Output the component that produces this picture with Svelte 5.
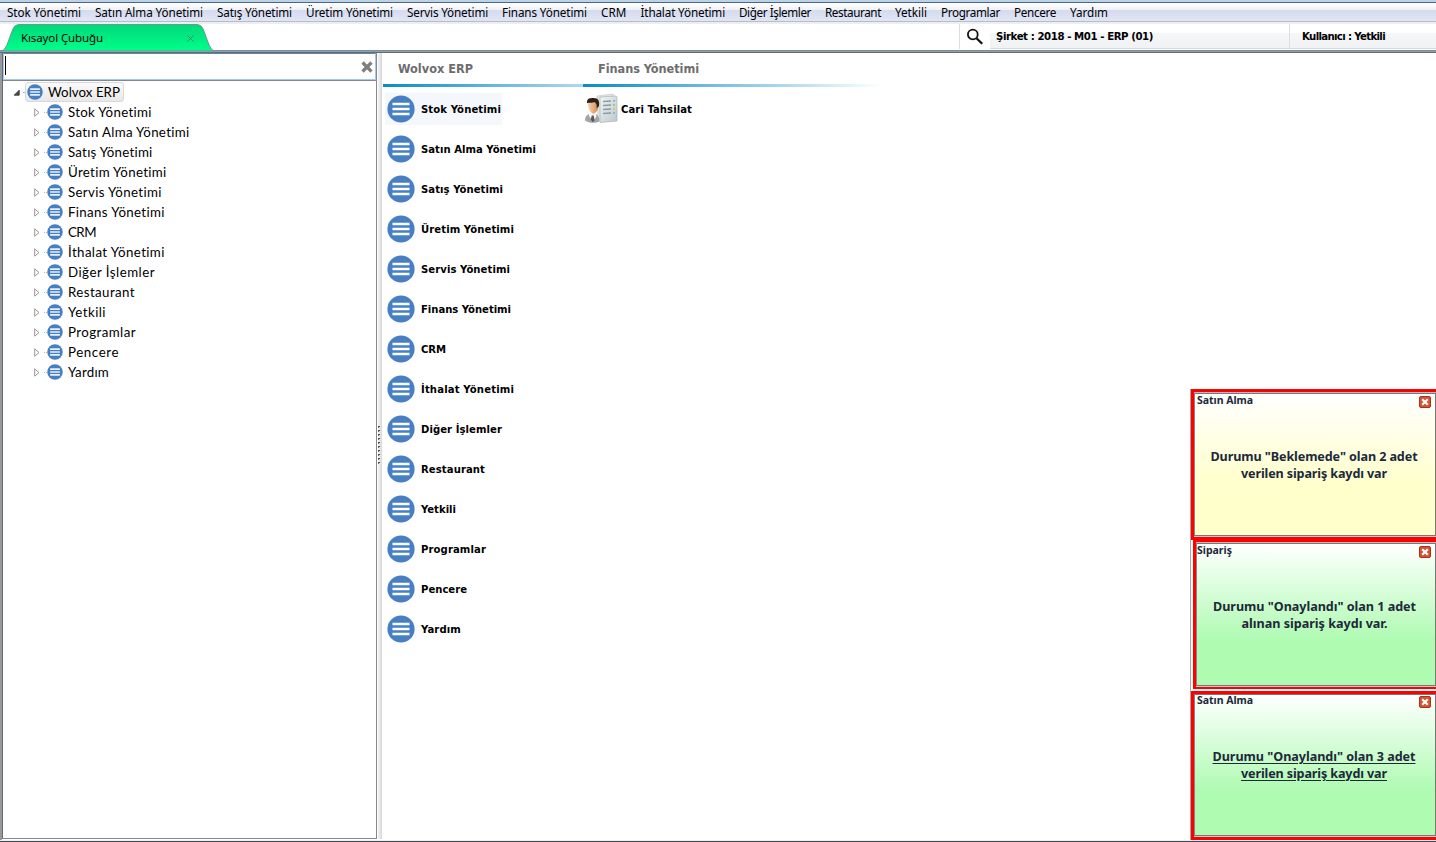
<script>
  const menu = [['Stok Yönetimi', 74], ['Satın Alma Yönetimi', 108], ['Satış Yönetimi', 75], ['Üretim Yönetimi', 87], ['Servis Yönetimi', 81], ['Finans Yönetimi', 85], ['CRM', 25.5], ['İthalat Yönetimi', 84.5], ['Diğer İşlemler', 72], ['Restaurant', 56], ['Yetkili', 32], ['Programlar', 59], ['Pencere', 42], ['Yardım', 38]];
  const treeWidths = [84, 122, 85, 99, 94, 97, 28, 97, 87, 67, 38, 68, 51, 41];
  const shortcutWidths = [80, 115, 82, 93, 89, 90, 25, 93, 81, 64, 35, 65, 46, 40];
  const notes = [
    { kind: 'yellow', title: 'Satın Alma', tw: 56, lines: [['Durumu "Beklemede" olan 2 adet', 207], ['verilen sipariş kaydı var', 146]] },
    { kind: 'green inset', title: 'Sipariş', tw: 35, lines: [['Durumu "Onaylandı" olan 1 adet', 203], ['alınan sipariş kaydı var.', 146]] },
    { kind: 'green last', title: 'Satın Alma', tw: 56, lines: [['Durumu "Onaylandı" olan 3 adet', 203], ['verilen sipariş kaydı var', 146]] }
  ];
  // Tracks a label so that it spans the given number of pixels.
  function fit(node, width) {
    const natural = node.getBoundingClientRect().width;
    node.style.letterSpacing = (width - natural) / node.textContent.length + 'px';
  }
</script>

{#snippet listIcon(size)}
  <svg class="list-icon" width={size} height={size} viewBox="0 0 28 28">
    <circle cx="14" cy="14" r="13.6" fill="#467fc4" />
    {#if size > 20}
      <path d="M5.5 9h17M5.5 14h17M5.5 19h17" stroke="#fff" stroke-width="2.4" />
    {:else}
      <path d="M5.5 9h17M5.5 14h17M5.5 19h17" stroke="#e9f1fc" stroke-width="2.8" />
    {/if}
  </svg>
{/snippet}

<div class="window">
  <div class="topline"></div>
  <nav>
    {#each menu as [label, w]}<div class="menu-item" style:width="{w}px"><span use:fit={w}>{label}</span></div>{/each}
  </nav>
  <header>
    <div class="tab">
      <svg class="tab-shape" width="214" height="27" viewBox="0 0 216 27" preserveAspectRatio="none">
        <defs><linearGradient id="tabfill" x2="0" y2="1"><stop stop-color="#02d879" /><stop offset="1" stop-color="#00ff8c" /></linearGradient></defs>
        <path d="M1 27 Q4 26 6 21 L12 5 Q14 .5 18 .5 H198 Q202 .5 204 5 L210 21 Q212 26 215 27Z" fill="url(#tabfill)" stroke="#609c92" />
      </svg>
      <span class="tab-label"><span use:fit={82}>Kısayol Çubuğu</span></span>
      <svg class="tab-x" width="7" height="7" viewBox="0 0 7 7"><path d="M.5 .5l6 6M6.5 .5l-6 6" stroke="#3b8b69" /></svg>
    </div>
    <div class="status">
      <svg class="search" width="18" height="18" viewBox="0 0 18 18" fill="none" stroke="#111"><circle cx="6.8" cy="6.5" r="4.9" stroke-width="1.8" /><path d="M10.5 10.2l5.7 5.6" stroke-width="2.3" /></svg>
      <div class="info company"><span use:fit={157}>Şirket : 2018 - M01 - ERP (01)</span></div>
      <div class="info user"><span use:fit={83}>Kullanıcı : Yetkili</span></div>
    </div>
  </header>
  <main>
    <aside>
      <div class="filter">
        <i class="caret"></i>
        <svg width="12" height="12" viewBox="0 0 12 12"><path d="M1.5 1.5l9 9M10.5 1.5l-9 9" stroke="#7f7f7f" stroke-width="3.2" /></svg>
      </div>
      <div class="tree">
        <div class="root">
          <svg width="7" height="7" viewBox="0 0 7 7"><path d="M6.2 1.2V6.2H1.2Z" fill="#505050" stroke="#262626" stroke-width=".8" /></svg>
          <i class="dots"></i>
          <div class="selected">{@render listIcon(16)}<span use:fit={72}>Wolvox ERP</span></div>
        </div>
        {#each menu as [label], i}
          <div class="branch">
            <svg class="arrow" width="6" height="9" viewBox="0 0 6 9"><path d="M.7 .8V8.2L5 4.5Z" fill="#fff" stroke="#999" /></svg>
            <i class="dots"></i>
            {@render listIcon(16)}
            <span use:fit={treeWidths[i]}>{label}</span>
          </div>
        {/each}
      </div>
    </aside>
    <div class="splitter"><div class="grip">{#each Array(10) as _}<i></i>{/each}</div></div>
    <section class="workspace">
      <div class="column">
        <h2><span use:fit={75}>Wolvox ERP</span></h2>
        <div class="rule"></div>
        {#each menu as [label], i}
          <div class="shortcut"><div class="hit" class:active={i === 0}>{@render listIcon(28)}<span use:fit={shortcutWidths[i]}>{label}</span></div></div>
        {/each}
      </div>
      <div class="column wide">
        <h2><span use:fit={101}>Finans Yönetimi</span></h2>
        <div class="rule"></div>
        <div class="shortcut"><div class="hit customer">
          <svg width="33" height="32" viewBox="0 0 33 32">
            <defs>
              <linearGradient id="paper" x2="1" y2="1"><stop stop-color="#f2f5f5" /><stop offset="1" stop-color="#bcc6c9" /></linearGradient>
              <linearGradient id="face" x2="1"><stop stop-color="#f9d5b1" /><stop offset="1" stop-color="#d6854d" /></linearGradient>
            </defs>
            <path d="M12 3L28 1l1 1v25l-16 1Z" fill="#dde3e4" stroke="#c5cdce" stroke-width=".7" />
            <path d="M15 4L31 3l1 1v24l-17 1.5Z" fill="url(#paper)" stroke="#a9b4b8" stroke-width=".7" />
            <path d="M18 8.5l8-.6M18 12.5l8-.6M18 16.5l8-.4M18 20.5l8-.4" stroke="#8d9ba4" stroke-width="1.5" />
            <path d="M28 7.7h2M28 20h2" stroke="#58b7df" stroke-width="1.6" /><path d="M28 12h2" stroke="#87c85c" stroke-width="1.6" /><path d="M28 16h2" stroke="#d6bd4f" stroke-width="1.6" />
            <g transform="translate(0 1.5) scale(.96)">
              <path d="M0 27c0-5 3-7 7-7h2c4 0 6 3 6 8-4 2-11 2-15-1Z" fill="#a2a6a9" />
              <path d="M4 20l3-1 4 1 1 3-4 5-4-6Z" fill="#f7f7f7" /><path d="M7 22l2 0 1 5-2 2-2-3Z" fill="#555b60" />
              <path d="M3 10c0-5 2-6 6-5s5 3 5 6c0 5-2 8-5 9-3 0-6-5-6-10Z" fill="url(#face)" />
              <path d="M2 9c0-3 1-5 4-5 3-1 7-.5 8 2s1 5 0 7l-2 1c1-4-1-6-3-6-3 1-5 0-7 1Z" fill="#29201c" />
            </g>
          </svg><span use:fit={71}>Cari Tahsilat</span>
        </div></div>
      </div>
    </section>
  </main>
  <div class="bottom"></div>
  <div class="notifications">
    {#each notes as n}
      <article class={n.kind}>
        <div class="note-frame"><div class="note">
          <div class="note-head"><b><span use:fit={n.tw}>{n.title}</span></b>
            <svg width="12" height="12" viewBox="0 0 12 12"><rect x=".5" y=".5" width="11" height="11" rx="1.5" fill="#d95032" stroke="#a5331d" /><path d="M3.2 3.2l5.6 5.6M8.8 3.2L3.2 8.8" stroke="#fff" stroke-width="2.2" /></svg>
          </div>
          <div class="message">{#each n.lines as [text, w]}<div><span use:fit={w}>{text}</span></div>{/each}</div>
        </div></div>
      </article>
    {/each}
  </div>
</div>

<style>
  :global(body) { margin: 0; background: #fff; overflow: hidden; }
  * { box-sizing: border-box; }
  span { white-space: nowrap; display: inline-block; }
  svg { display: block; flex: none; }
  .window { position: relative; width: 1436px; height: 842px; display: flex; flex-direction: column; overflow: hidden; background: #fff; color: #000; font-family: "Noto Sans", sans-serif; }
  .topline { height: 3px; flex: none; background: #b9d3ee; border-bottom: 1px solid #536579; }
  nav { height: 21px; flex: none; display: flex; gap: 14px; padding-left: 7px; background: linear-gradient(#fff 0, #eef1f8 7px, #d5dbee 7px, #e0e6f4 18px, #b4bdcc 18px, #b4bdcc 19px, #eee 19px); font-size: 11.7px; line-height: 18px; }
  .menu-item { flex: none; }
  header { height: 29px; flex: none; display: flex; justify-content: space-between; background: linear-gradient(#fff 26px, #7090b0 26px 27px, #9a9a9a 27px 28px, #6c6b69 28px); }
  .tab { width: 216px; height: 27px; display: grid; padding-left: 1px; }
  .tab-shape { grid-area: 1/1; }
  .tab-label { grid-area: 1/1; font-size: 11.5px; line-height: 27px; padding-left: 20px; z-index: 1; }
  .tab-x { grid-area: 1/1; margin: 11px 0 0 186px; z-index: 1; }
  .status { width: 477px; height: 25px; display: flex; border-left: 1px solid #ddd; font: bold 10.2px "DejaVu Sans", sans-serif; line-height: 24px; }
  .search { margin: 4px 6px 0 6px; }
  .info { height: 25px; line-height: 25px; background: linear-gradient(#fff 0 9px, #f5f6f7 9px, #f0f2f4 24px, #d9d9d9 24px); padding-left: 6px; }
  .company { width: 300px; border-right: 1px solid #dedede; }
  .user { flex: 1; padding-left: 12px; }
  main { height: 787px; flex: none; display: flex; border-left: 2px solid #99999a; }
  aside { width: 375px; border: 1px solid #858790; border-left-color: #606b78; border-top: 0; display: flex; flex-direction: column; height: 786px; }
  .filter { height: 27px; flex: none; border: 1px solid #a6cae9; border-top-color: #5687b7; display: flex; justify-content: space-between; align-items: center; padding: 0 2px 0 1px; }
  .caret { width: 1px; height: 19px; background: #000; margin-top: -3px; }
  .tree { flex: 1; border-top: 1px solid #858790; font: 13.3px Lato, "Noto Sans", sans-serif; padding-top: 1px; }
  .root, .branch { height: 20px; display: flex; align-items: center; }
  .root { padding-left: 10px; }
  .dots { width: 5px; border-top: 1px dotted #bbb; margin-left: 4px; }
  .root .dots { margin: 0 0 0 3px; width: 2px; }
  .selected { height: 20px; display: flex; align-items: center; gap: 5px; padding: 0 3px 0 1px; border: 1px solid #d9d9d9; border-radius: 3px; background: linear-gradient(#fafafa, #e8e8e8); }
  .branch { padding-left: 31px; }
  .branch .dots { margin-right: 2px; }
  .branch .list-icon { margin-right: 5px; margin-left: -4px; }
  .splitter { width: 6px; padding-left: 1px; height: 786px; background: linear-gradient(90deg, #fff 1px, #f3f3f3 1px, #d7d7d7 5px, #fff 5px); display: flex; align-items: center; }
  .grip { display: flex; flex-direction: column; gap: 2px; margin-top: -2px; }
  .grip i { width: 2px; height: 2px; border-left: 1px solid #666; border-top: 1px solid #444; }
  .workspace { display: flex; }
  .column { width: 200px; }
  .column.wide { width: 300px; }
  h2 { margin: 0; height: 31px; padding-left: 15px; font: bold 12.6px/32px "DejaVu Sans Condensed", "DejaVu Sans", sans-serif; color: #6d6d6d; }
  .rule { height: 3px; background: linear-gradient(90deg, #078cc7, #b0d9ec); }
  .wide .rule { background: linear-gradient(90deg, #078cc7, #fff); }
  .column > .rule + .shortcut { margin-top: 2px; }
  .shortcut { height: 40px; padding: 4px 0 4px 2px; font: bold 11.2px "DejaVu Sans Condensed", "DejaVu Sans", sans-serif; }
  .hit { width: max-content; height: 32px; display: flex; align-items: center; gap: 6px; padding: 0 1px 0 2px; }
  .active { background: #f4f8fd; }
  .customer { gap: 3px; }
  .customer svg { margin-left: -2px; }
  .bottom { height: 2px; border-bottom: 1px solid #454c58; background: #eee; }
  .notifications { position: absolute; right: 0; top: 389px; width: 246px; display: flex; flex-direction: column; border-left: 1px solid #aaa; }
  article { width: 245px; height: 151px; border: 3px solid red; border-right: 0; background: #fff; }
  .inset { width: 243px; margin-left: 2px; height: 150px; margin-top: -1px; }
  .last { height: 149px; margin-top: 2px; }
  .note-frame { height: 100%; border-top: 1px solid #bbb; }
  .last .note-frame { border-top: 0; }
  .note { height: 143px; border: 1px solid #777; border-left-color: #888; background: linear-gradient(#fff, #ffffcb 65%, #ffffcb); color: #20283a; box-shadow: 0 1px #ccc; }
  .last .note { height: 142px; }
  .green .note { background: linear-gradient(#fff, #affbb2 68%, #affbb2); }
  .note-head { display: flex; justify-content: space-between; padding: 0 4px 0 2px; height: 17px; font-size: 10.5px; line-height: 12px; }
  .note-head svg { margin-top: 2px; }
  .last .note-head { margin-top: -1px; }
  .message { padding-top: 37px; margin-left: -2px; text-align: center; font: bold 12.6px/17px "Noto Sans", sans-serif; }
  .inset .note-head { padding-left: 0; }
  .inset .message { margin-left: -3px; }
  .last .message { text-decoration: underline; text-underline-offset: 2px; }
  .last .message span { display: inline; }
</style>
